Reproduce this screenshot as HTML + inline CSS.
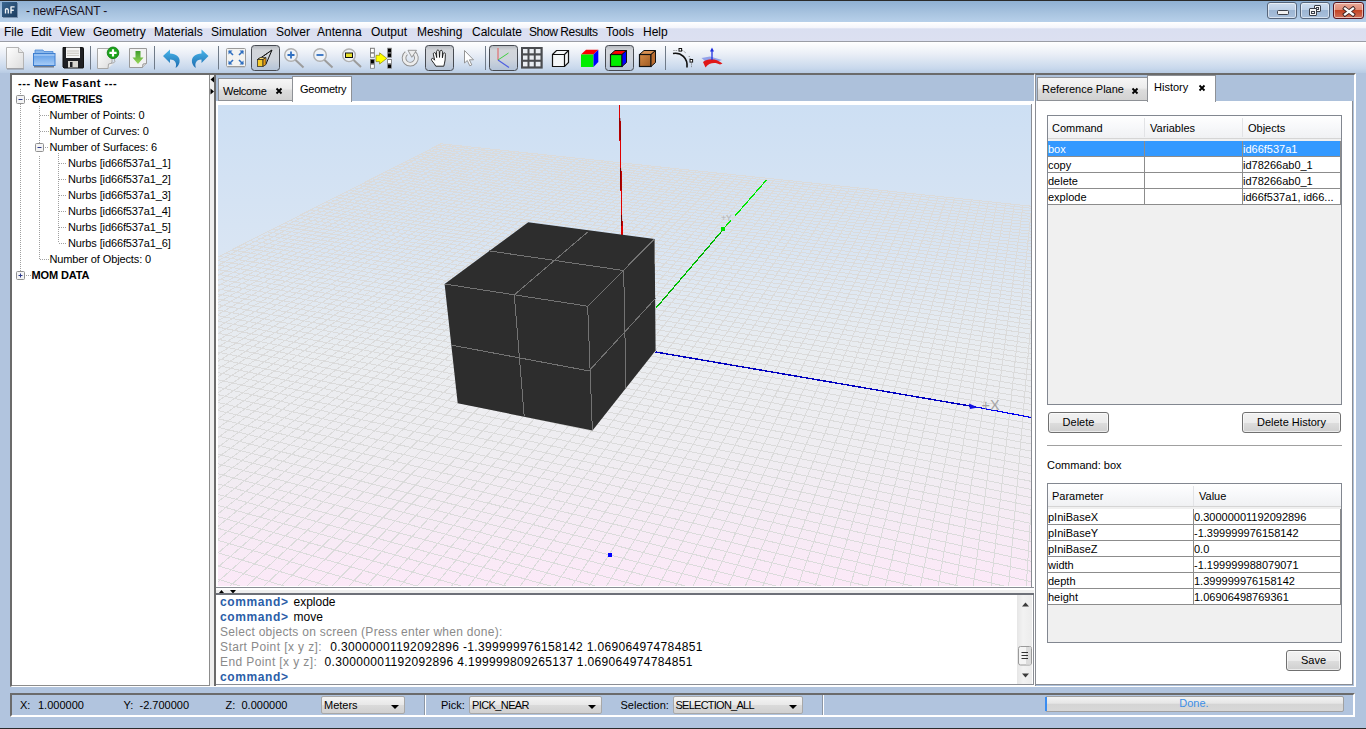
<!DOCTYPE html>
<html><head><meta charset="utf-8">
<style>
*{margin:0;padding:0;box-sizing:border-box}
html,body{width:1366px;height:729px;overflow:hidden;background:#b1c4de;font-family:"Liberation Sans",sans-serif;font-size:11px;color:#000}
.a{position:absolute}
#title{left:0;top:0;width:1366px;height:22px;background:linear-gradient(#8fb0d3,#a9c4e0 60%,#b7d0ea);border-top:1px solid #2a2a2a}
#menu{left:0;top:22px;width:1366px;height:20px;background:linear-gradient(#ffffff 0,#f4f5fb 30%,#dadff1 36%,#dce0f1 100%);border-bottom:1px solid #9a9da6}
#menu span{position:absolute;top:3px;font-size:12px;color:#000}
#tool{left:0;top:42px;width:1366px;height:31px;background:linear-gradient(#ffffff,#e9eef6 40%,#c8d8ec 85%,#b8cbe3)}
.wbtn{top:1px;width:30px;height:17px;border:1px solid #56657a;border-radius:3px;background:linear-gradient(#cddcee 0,#bccfe6 45%,#9db6d3 50%,#a9c0dc 100%);box-shadow:inset 0 0 0 1px rgba(255,255,255,.55)}
.close{width:31px;border-color:#5a1620;background:linear-gradient(#eaa898 0,#e08d78 45%,#c44424 50%,#d0705a 100%)}
.cmd{font-size:12px;line-height:15px;white-space:nowrap;color:#000}
.cmd b,.cmd span{position:absolute;height:15px}
.cmd b{color:#2b5ea8;letter-spacing:0.6px}
.cmd .g{color:#8a8a8a}
.tab{position:absolute;height:23px;border:1px solid #8e9196;border-bottom:none;background:linear-gradient(#f6f6f6 0,#ececec 45%,#dcdcdc 55%,#d2d2d2 100%);font-size:11px}
.tab.sel{background:#fff}
.x{position:absolute;font-weight:bold;font-size:11px}
.btn{position:absolute;border:1px solid #707070;border-radius:3px;background:linear-gradient(#f2f2f2 0,#ebebeb 50%,#dddddd 51%,#cfcfcf 100%);font-size:11px;text-align:center;box-shadow:inset 0 0 0 1px rgba(255,255,255,.6)}
.tbl{position:absolute;border:1px solid #828790;background:#f0f0f0}
.hd{position:absolute;height:22px;background:linear-gradient(#ffffff,#f7f8fa 50%,#f0f1f3);border-bottom:1px solid #d5d5d5;font-size:11px}
.cell{position:absolute;height:16px;border-right:1px solid #8c8c8c;border-bottom:1px solid #8c8c8c;background:#fff;font-size:11px;line-height:16px;padding-left:0;white-space:nowrap;overflow:hidden}
.combo{position:absolute;height:18px;border:1px solid #a8a8a8;border-radius:2px;background:linear-gradient(#f4f4f4,#e8e8e8 50%,#dadada 51%,#d0d0d0);font-size:11px;line-height:17px;padding-left:2px}
.combo i{position:absolute;right:5px;top:8px;border-left:4px solid transparent;border-right:4px solid transparent;border-top:4px solid #000}
.st{font-size:11px}
.panel{border:2px solid #6b6b6b;border-right-color:#fff;border-bottom-color:#fff;background:#fff}
.tree{font-size:11px;line-height:16px;letter-spacing:-0.12px}
.tree div{position:absolute;white-space:nowrap}
</style></head>
<body>
<div id="title" class="a">
<div class="a" style="left:2px;top:1px;width:15px;height:15px;background:linear-gradient(135deg,#3a6690,#1c3d60);box-shadow:1px 1px 0 rgba(40,60,90,.4)"></div>
<svg class="a" style="left:2px;top:1px" width="15" height="15" viewBox="0 0 15 15"><path d="M3.5 6.8V11.5M6.3 7.5V11.5M3.5 7.2Q4.9 6.2 6.3 7.5" stroke="#eef2f6" stroke-width="1.3" fill="none"/><path d="M9 4.5V11.5M9 4.9H12.6M9 8.2H11.8" stroke="#eef2f6" stroke-width="1.4" fill="none"/></svg>
<div class="a" style="left:26px;top:3px;font-size:12px;color:#1a1020;letter-spacing:-0.15px">- newFASANT -</div>
<div class="a wbtn" style="left:1267px"><div class="a" style="left:9px;top:7px;width:12px;height:5px;border:1px solid #3a3e48;border-radius:1.5px;background:#f0f0f0"></div></div>
<div class="a wbtn" style="left:1300px"><div class="a" style="left:13px;top:2px;width:7px;height:7px;border:1px solid #3a3e48;border-radius:1px;background:#f4f4f4"></div><div class="a" style="left:15px;top:4px;width:3px;height:3px;border:1px solid #3a3e48;"></div><div class="a" style="left:8px;top:5px;width:8px;height:8px;border:1px solid #3a3e48;border-radius:1px;background:#f4f4f4"></div><div class="a" style="left:10px;top:8px;width:4px;height:3px;border:1px solid #3a3e48;"></div></div>
<div class="a wbtn close" style="left:1333px"><svg class="a" style="left:8px;top:3px" width="14" height="11" viewBox="0 0 14 11"><path d="M3 2.5L11 8.5M11 2.5L3 8.5" stroke="#3b2020" stroke-width="4" stroke-linecap="square"/><path d="M3 2.5L11 8.5M11 2.5L3 8.5" stroke="#fafafa" stroke-width="2.2" stroke-linecap="square"/></svg></div>
</div>
<div id="menu" class="a">
<span style="left:4px">File</span>
<span style="left:31px">Edit</span>
<span style="left:59px">View</span>
<span style="left:93px">Geometry</span>
<span style="left:154px">Materials</span>
<span style="left:211px">Simulation</span>
<span style="left:276px">Solver</span>
<span style="left:317px">Antenna</span>
<span style="left:371px">Output</span>
<span style="left:417px">Meshing</span>
<span style="left:472px">Calculate</span>
<span style="left:529px;letter-spacing:-0.4px">Show Results</span>
<span style="left:606px">Tools</span>
<span style="left:643px">Help</span>
</div>
<div id="tool" class="a"></div>
<svg class="a" style="left:0;top:42px" width="740" height="32" viewBox="0 42 740 32">
<defs>
<linearGradient id="gdoc" x1="0" y1="0" x2="1" y2="1"><stop offset="0" stop-color="#ffffff"/><stop offset="1" stop-color="#dcdcdc"/></linearGradient>
<linearGradient id="gfold" x1="0" y1="0" x2="0" y2="1"><stop offset="0" stop-color="#5b9be6"/><stop offset="1" stop-color="#a9cdf7"/></linearGradient>
<linearGradient id="gpress" x1="0" y1="0" x2="0" y2="1"><stop offset="0" stop-color="#b4b8be"/><stop offset="0.2" stop-color="#d3d6db"/><stop offset="0.55" stop-color="#cfd4dc"/><stop offset="1" stop-color="#b3c3d8"/></linearGradient>
<linearGradient id="gblue" x1="0" y1="0" x2="0" y2="1"><stop offset="0" stop-color="#49b6ea"/><stop offset="1" stop-color="#1d6cb0"/></linearGradient>
<linearGradient id="ggreen" x1="0" y1="0" x2="0" y2="1"><stop offset="0" stop-color="#3f9d2a"/><stop offset="1" stop-color="#9ad85c"/></linearGradient>
<linearGradient id="gwood" x1="0" y1="0" x2="1" y2="1"><stop offset="0" stop-color="#d58a45"/><stop offset="1" stop-color="#9e5a22"/></linearGradient>
</defs>
<!-- new doc -->
<path d="M6.5 47.5H18.5L23.5 52.5V68.5H6.5Z" fill="url(#gdoc)" stroke="#b4b4b4"/>
<path d="M18.5 47.5V52.5H23.5" fill="#e8e8e8" stroke="#b4b4b4"/>
<line x1="7" y1="69" x2="24" y2="69" stroke="#8a8f98" stroke-width="1"/>
<!-- folder -->
<path d="M35 50h8l1 1.5h9V54H35Z" fill="#8ab8ec" stroke="#4a88d6" stroke-width="0.8"/>
<rect x="33.5" y="53.5" width="21.5" height="12" fill="url(#gfold)" stroke="#3f7fd0"/>
<line x1="34" y1="55" x2="54.5" y2="55" stroke="#c9e0fb" stroke-width="1"/>
<line x1="34" y1="66.8" x2="54" y2="66.8" stroke="#5a6270" stroke-width="1.2"/>
<!-- floppy -->
<path d="M63 47.5h19.5a1 1 0 0 1 1 1V67.5a0.5 .5 0 0 1 -.5 .5H64l-1-1Z" fill="#1f2024" stroke="#111"/>
<rect x="66" y="47.5" width="14" height="10.5" fill="#f6f6f6"/>
<line x1="67" y1="51" x2="79" y2="51" stroke="#c8c4bc"/><line x1="67" y1="53.2" x2="79" y2="53.2" stroke="#c8c4bc"/><line x1="67" y1="55.4" x2="79" y2="55.4" stroke="#c8c4bc"/>
<rect x="68" y="61" width="10" height="6.5" fill="#d8d6d0"/><rect x="70" y="62" width="2.5" height="5" fill="#1f2024"/>
<!-- sep -->
<line x1="90.5" y1="46" x2="90.5" y2="69.5" stroke="#6f7a88"/>
<!-- new plus -->
<path d="M97.5 48.5H112V62L108 68.5H97.5Z" fill="url(#gdoc)" stroke="#a8a8a8"/>
<path d="M108 68.5L108.5 64L114.5 62.5" fill="#ececec" stroke="#a8a8a8"/>
<line x1="112" y1="50" x2="115" y2="62" stroke="#a8a8a8"/>
<circle cx="113" cy="52.8" r="5.8" fill="#1aa31a" stroke="#0c7a0c" stroke-width="0.8"/>
<path d="M113 49.2V56.4M109.4 52.8H116.6" stroke="#fff" stroke-width="2.2"/>
<!-- import -->
<path d="M129.5 48.5H146.5V63.5L142.5 67.5H129.5Z" fill="#f2f2f2" stroke="#9a9a9a"/>
<path d="M142.5 67.5L143 64L146.5 63.5" fill="#e0e0e0" stroke="#9a9a9a"/>
<path d="M135.5 51H140.5V57.5H143.5L138 64L132.5 57.5H135.5Z" fill="url(#ggreen)"/>
<!-- sep -->
<line x1="154.5" y1="46" x2="154.5" y2="69.5" stroke="#6f7a88"/>
<!-- undo -->
<path d="M163 56L170 49.5V53.5C176 53.5 180.5 57 179.5 62.5C179 65 177 67.5 175.5 67.8C177 64.5 176 59.5 170 59.5V63Z" fill="url(#gblue)"/>
<!-- redo -->
<path d="M208.5 56L201.5 49.5V53.5C195.5 53.5 191 57 192 62.5C192.5 65 194.5 67.5 196 67.8C194.5 64.5 195.5 59.5 201.5 59.5V63Z" fill="url(#gblue)"/>
<!-- sep -->
<line x1="218.5" y1="46" x2="218.5" y2="69.5" stroke="#6f7a88"/>
<!-- fit -->
<rect x="226.5" y="48.5" width="19" height="18" fill="#f3f3f1" stroke="#9a9a9a" rx="1"/>
<line x1="227" y1="67.5" x2="245" y2="67.5" stroke="#bcc6d2"/>
<g stroke="#2f6fc0" stroke-width="1.6" fill="#2f6fc0">
<path d="M229 51L233 55" /><path d="M228.5 50.5h4l-4 4z" stroke="none"/>
<path d="M243 51L239 55"/><path d="M243.5 50.5h-4l4 4z" stroke="none"/>
<path d="M229 64L233 60"/><path d="M228.5 64.5h4l-4-4z" stroke="none"/>
<path d="M243 64L239 60"/><path d="M243.5 64.5h-4l4-4z" stroke="none"/>
</g>
<!-- pressed perspective -->
<rect x="251.5" y="45.5" width="28" height="25" rx="3" fill="url(#gpress)" stroke="#474b52"/>
<path d="M258 59L262 57L272 50L266 64L262 66" fill="none" stroke="#111" stroke-width="1"/>
<path d="M262 57L272 50" stroke="#111" stroke-dasharray="1.5 1"/>
<path d="M257.5 59.5l3-2h5.5l-3 2z" fill="#f5d86a" stroke="#222" stroke-width=".7"/>
<rect x="257.5" y="59.5" width="5.5" height="7" fill="#f3c92c" stroke="#222" stroke-width=".7"/>
<path d="M263 59.5l3-2V64.5l-3 2z" fill="#e39a15" stroke="#222" stroke-width=".7"/>
<!-- zoom in -->
<line x1="295" y1="59.5" x2="303.5" y2="67.5" stroke="#9c9c9c" stroke-width="2"/>
<circle cx="291" cy="55" r="6.3" fill="#eef2f7" stroke="#b0b0b0" stroke-width="1.4"/>
<path d="M291 51.5V58.5M287.5 55H294.5" stroke="#2f6fc0" stroke-width="1.8"/>
<!-- zoom out -->
<line x1="324" y1="59.5" x2="332.5" y2="67.5" stroke="#9c9c9c" stroke-width="2"/>
<circle cx="320" cy="55" r="6.3" fill="#eef2f7" stroke="#b0b0b0" stroke-width="1.4"/>
<path d="M316.5 55H323.5" stroke="#2f6fc0" stroke-width="1.8"/>
<!-- zoom window -->
<line x1="353" y1="59.5" x2="361" y2="67" stroke="#9c9c9c" stroke-width="2"/>
<circle cx="349" cy="55.3" r="6.3" fill="#eef2f7" stroke="#b0b0b0" stroke-width="1.4"/>
<rect x="345.5" y="53" width="7" height="4.5" fill="#e8e02a" stroke="#111" stroke-width="1"/>
<!-- arrow columns -->
<rect x="370" y="47.8" width="4.8" height="9.9" fill="#7a7a7a"/><rect x="370" y="59" width="4.8" height="9.6" fill="#7a7a7a"/>
<rect x="370.9" y="48.8" width="3" height="3.4" fill="#fff"/><rect x="370.9" y="53.6" width="3" height="3.3" fill="#fff"/><rect x="370.9" y="59.9" width="3" height="3.3" fill="#000"/><rect x="370.9" y="64.7" width="3" height="3.2" fill="#fff"/>
<rect x="387.2" y="47.8" width="4.6" height="9.9" fill="#7a7a7a"/><rect x="387.2" y="59" width="4.6" height="9.6" fill="#7a7a7a"/>
<rect x="388" y="48.8" width="3" height="3.4" fill="#000"/><rect x="388" y="53.6" width="3" height="3.3" fill="#000"/><rect x="388" y="59.9" width="3" height="3.3" fill="#fff"/><rect x="388" y="64.7" width="3" height="3.2" fill="#000"/>
<path d="M376 55.3H379.6V52.8L386.8 58.4L379.6 64V61.6H376Z" fill="#ffff00" stroke="#7a7000" stroke-width="0.6"/>
<!-- rotate -->
<path d="M406.4 53.1A6.2 6.2 0 1 0 413.6 52.8" fill="none" stroke="#8e8e8e" stroke-width="4.6"/>
<path d="M406.4 53.1A6.2 6.2 0 1 0 413.6 52.8" fill="none" stroke="#ededed" stroke-width="2.8"/>
<path d="M408 50.3H416.5L411.8 57.3Z" fill="#ededed" stroke="#8e8e8e" stroke-width="0.9" stroke-linejoin="round"/>
<!-- pressed hand -->
<rect x="425.5" y="45.5" width="28" height="25" rx="3" fill="url(#gpress)" stroke="#474b52"/>
<path d="M435.8 66.2C435 64.5 433.5 62.8 432 60.8C431.2 59.8 431.3 58.6 432.3 58.4C433.2 58.2 434 59.3 434.6 60.2L433.4 54.2C433.2 53.2 433.8 52.6 434.5 52.6C435.2 52.6 435.7 53.2 435.9 54L436.7 57.6L436.6 51.6C436.6 50.7 437.2 50.1 437.9 50.1C438.6 50.1 439.2 50.7 439.2 51.6L439.5 57.4L439.9 51.7C440 50.8 440.6 50.3 441.2 50.3C441.9 50.3 442.4 50.9 442.4 51.7L442.4 57.8L443.1 54C443.3 53.1 443.8 52.7 444.4 52.8C445.1 52.9 445.5 53.5 445.4 54.3L445.1 60C444.9 62 444.2 64.3 443.8 66.2Z" fill="#fff" stroke="#111" stroke-width="0.9" stroke-linejoin="round"/>
<!-- cursor -->
<path d="M464.5 50.5V63L467.3 60.5L469.8 65.8L471.8 64.9L469.4 59.8H473.5Z" fill="#fff" stroke="#8a8a8a" stroke-width="0.9" stroke-linejoin="round"/>
<!-- sep -->
<line x1="485.5" y1="46" x2="485.5" y2="70" stroke="#6f7a88"/>
<!-- pressed axes -->
<rect x="489.5" y="45.5" width="28" height="25" rx="3" fill="url(#gpress)" stroke="#474b52"/>
<line x1="498" y1="48" x2="498" y2="60" stroke="#e07070" stroke-width="1.2"/>
<line x1="498" y1="60" x2="508.5" y2="53" stroke="#40d040" stroke-width="1"/>
<line x1="498" y1="60" x2="509" y2="67.5" stroke="#5060e0" stroke-width="1.2"/>
<!-- grid -->
<rect x="521" y="47" width="21.7" height="21.6" fill="#4a4c50"/>
<g fill="#e9edf2"><rect x="523" y="49" width="4.5" height="4.3"/><rect x="529.5" y="49" width="4.3" height="4.3"/><rect x="535.7" y="49" width="4.8" height="4.3"/><rect x="523" y="55.5" width="4.5" height="4.2"/><rect x="529.5" y="55.5" width="4.3" height="4.2"/><rect x="535.7" y="55.5" width="4.8" height="4.2"/><rect x="523" y="61.8" width="4.5" height="4.6"/><rect x="529.5" y="61.8" width="4.3" height="4.6"/><rect x="535.7" y="61.8" width="4.8" height="4.6"/></g>
<!-- white cube -->
<path d="M552.5 54.5L556.5 50.5H568.5V62.5L564.5 66.5H552.5Z" fill="#f4f6f8" stroke="#111" stroke-width="1.2"/>
<path d="M552.5 54.5H564.5V66.5M564.5 54.5L568.5 50.5" fill="none" stroke="#111" stroke-width="1.2"/>
<!-- rgb cube -->
<path d="M581 54.5L586 49.7H598.3L593.5 54.5Z" fill="#ff0000"/>
<rect x="581" y="54.5" width="12.5" height="12.5" fill="#00ee00"/>
<path d="M593.5 54.5L598.3 49.7V62L593.5 67Z" fill="#0000ff"/>
<!-- pressed rgb -->
<rect x="605.5" y="45.5" width="28" height="25" rx="3" fill="url(#gpress)" stroke="#474b52"/>
<path d="M610.5 54.5L615 50.5H626.5L622 54.5Z" fill="#ff0000" stroke="#111" stroke-width="1"/>
<rect x="610.5" y="54.5" width="11.5" height="12" fill="#00ee00" stroke="#111" stroke-width="1.2"/>
<path d="M622 54.5L626.5 50.5V62.5L622 66.5Z" fill="#0000ff" stroke="#111" stroke-width="1"/>
<!-- wood cube -->
<path d="M639.5 54.5L644 50.5H655.5L651 54.5Z" fill="#d99050" stroke="#111" stroke-width="1"/>
<rect x="639.5" y="54.5" width="11.5" height="12" fill="url(#gwood)" stroke="#111" stroke-width="1.2"/>
<path d="M651 54.5L655.5 50.5V62.5L651 66.5Z" fill="#b86c30" stroke="#111" stroke-width="1"/>
<!-- sep -->
<line x1="665.5" y1="46" x2="665.5" y2="70" stroke="#6f7a88"/>
<!-- arc -->
<path d="M673 53.5C681 52 688 58 687 67.5" fill="none" stroke="#111" stroke-width="1.6"/>
<path d="M673.5 50.5H678M682 50L686 53M689 56L691 60.5M691.5 63.5V68" stroke="#555" stroke-width=".8" stroke-dasharray="1 1.2"/>
<rect x="679" y="48.5" width="2.6" height="2.6" fill="#fff" stroke="#111" stroke-width="1"/>
<rect x="690" y="59.5" width="2.6" height="2.6" fill="#fff" stroke="#111" stroke-width="1"/>
<!-- surface -->
<path d="M701.5 58L710 56.5L722 60L716 62L705 61Z" fill="#7e8ee6" opacity=".8"/>
<path d="M703 62C708 58 716 58 722.5 63.5L720 64.5C716 62 709 62 705.5 67.5Z" fill="#e01818"/>
<line x1="712" y1="49" x2="712" y2="60" stroke="#2030e0" stroke-width="1.3"/>
<path d="M710 51.5L712 47.5L714 51.5Z" fill="#2030e0"/>
</svg>

<!-- left tree panel -->
<div class="a" style="left:10px;top:73px;width:1346px;height:614px;border-top:2px solid #6b6b6b;border-left:2px solid #6b6b6b;border-right:2px solid #fff;border-bottom:1px solid #fff;background:#efefef"></div>
<div class="a" style="left:12px;top:75px;width:198px;height:611px;border-right:1px solid #8c8c8c;border-bottom:1px solid #8c8c8c;background:#fff"></div>

<div class="a tree" style="left:0;top:0">
<div style="left:18px;top:75px;height:16px;font-weight:bold;letter-spacing:0.55px">--- New Fasant ---</div>
<div style="left:31.5px;top:91px;height:16px;font-weight:bold;letter-spacing:-0.25px">GEOMETRIES</div>
<div style="left:49.5px;top:107px;height:16px">Number of Points: 0</div>
<div style="left:49.5px;top:123px;height:16px">Number of Curves: 0</div>
<div style="left:49.5px;top:139px;height:16px">Number of Surfaces: 6</div>
<div style="left:68px;top:155px;height:16px">Nurbs [id66f537a1_1]</div>
<div style="left:68px;top:171px;height:16px">Nurbs [id66f537a1_2]</div>
<div style="left:68px;top:187px;height:16px">Nurbs [id66f537a1_3]</div>
<div style="left:68px;top:203px;height:16px">Nurbs [id66f537a1_4]</div>
<div style="left:68px;top:219px;height:16px">Nurbs [id66f537a1_5]</div>
<div style="left:68px;top:235px;height:16px">Nurbs [id66f537a1_6]</div>
<div style="left:49.5px;top:251px;height:16px">Number of Objects: 0</div>
<div style="left:31.5px;top:267px;height:16px;font-weight:bold">MOM DATA</div>
</div>
<svg class="a" style="left:0;top:0" width="210" height="300" viewBox="0 0 210 300"><g stroke="#a0a0a0" stroke-width="1" stroke-dasharray="1 1" fill="none"><path d="M20.5 89V95M20.5 104V275M26 99.5H31M39.5 106V147M39.5 156V259.5H49M26 275.5H31M58.5 153V243M40 115.5H49M40 131.5H49M45 147.5H49"/><path d="M59 163.5H67"/><path d="M59 179.5H67"/><path d="M59 195.5H67"/><path d="M59 211.5H67"/><path d="M59 227.5H67"/><path d="M59 243.5H67"/></g><rect x="16.5" y="95.5" width="8" height="8" rx="1" fill="#f4f4f4" stroke="#919191"/><path d="M18.5 99.5H22.5" stroke="#2d3a8c" stroke-width="1"/><rect x="35.5" y="143.5" width="8" height="8" rx="1" fill="#f4f4f4" stroke="#919191"/><path d="M37.5 147.5H41.5" stroke="#2d3a8c" stroke-width="1"/><rect x="16.5" y="271.5" width="8" height="8" rx="1" fill="#f4f4f4" stroke="#919191"/><path d="M18.5 275.5H22.5" stroke="#2d3a8c" stroke-width="1"/><path d="M20.5 273.5V277.5" stroke="#2d3a8c" stroke-width="1"/></svg>
<!-- center -->
<div class="a" style="left:214px;top:73px;width:821px;height:613px;border-top:2px solid #6b6b6b;border-left:2px solid #6b6b6b;border-right:1px solid #fff;background:#adc1db"></div>
<div class="a" style="left:216px;top:101px;width:818px;height:585px;background:#fff"></div>
<div class="a" id="vp" style="left:218px;top:105px;width:813px;height:482px;overflow:hidden;background:linear-gradient(#cddff3 0%,#d9e5f3 30%,#eaedf0 52%,#efedf1 72%,#fce9f8 100%)">
<svg class="a" style="left:0;top:0" width="813" height="482" viewBox="0 0 813 482"><path d="M-588.5 456.6L227.1 39.3M-581.3 447.0L1317.1 1224.0M-579.8 460.3L232.8 39.9M-563.4 437.9L1304.8 1183.8M-570.9 464.0L238.5 40.5M-546.0 429.0L1293.1 1145.8M-562.0 467.7L244.3 41.1M-528.9 420.4L1282.0 1109.6M-552.9 471.5L250.1 41.7M-512.3 412.0L1271.5 1075.3M-543.8 475.3L255.9 42.3M-496.0 403.7L1261.5 1042.6M-534.6 479.1L261.8 42.9M-480.2 395.7L1251.9 1011.4M-525.2 483.0L267.6 43.6M-464.7 387.8L1242.8 981.7M-515.8 487.0L273.5 44.2M-449.5 380.1L1234.1 953.3M-506.2 490.9L279.5 44.8M-434.8 372.6L1225.7 926.2M-496.5 495.0L285.4 45.4M-420.3 365.3L1217.8 900.2M-486.8 499.1L291.4 46.1M-406.2 358.1L1210.1 875.3M-476.9 503.2L297.4 46.7M-392.3 351.1L1202.8 851.4M-466.9 507.4L303.5 47.3M-378.8 344.2L1195.8 828.6M-456.7 511.6L309.5 48.0M-365.6 337.5L1189.0 806.6M-446.5 515.8L315.6 48.6M-352.6 330.9L1182.6 785.4M-436.1 520.2L321.8 49.3M-339.9 324.5L1176.3 765.1M-425.7 524.5L327.9 49.9M-327.5 318.2L1170.3 745.5M-415.1 529.0L334.1 50.6M-315.3 312.0L1164.5 726.7M-404.3 533.4L340.3 51.2M-303.4 305.9L1158.9 708.5M-393.5 538.0L346.6 51.9M-291.7 300.0L1153.6 691.0M-382.5 542.6L352.9 52.6M-280.3 294.2L1148.4 674.1M-371.3 547.2L359.2 53.2M-269.1 288.5L1143.4 657.7M-360.1 551.9L365.5 53.9M-258.1 282.9L1138.5 641.9M-348.7 556.6L371.9 54.6M-247.3 277.4L1133.8 626.7M-337.1 561.5L378.3 55.3M-236.7 272.1L1129.3 611.9M-325.4 566.3L384.8 55.9M-226.3 266.8L1124.9 597.6M-313.6 571.3L391.2 56.6M-216.1 261.6L1120.7 583.8M-301.6 576.3L397.7 57.3M-206.1 256.6L1116.5 570.3M-289.4 581.3L404.3 58.0M-196.3 251.6L1112.5 557.3M-277.1 586.5L410.9 58.7M-186.7 246.7L1108.7 544.7M-264.7 591.7L417.5 59.4M-177.2 241.9L1104.9 532.5M-252.1 596.9L424.1 60.1M-168.0 237.2L1101.3 520.6M-239.3 602.3L430.8 60.8M-158.8 232.6L1097.7 509.0M-226.3 607.7L437.5 61.5M-149.9 228.0L1094.3 497.8M-213.2 613.1L444.2 62.2M-141.1 223.6L1090.9 486.9M-199.9 618.7L451.0 62.9M-132.4 219.2L1087.7 476.3M-186.4 624.3L457.8 63.7M-123.9 214.8L1084.5 466.0M-172.8 630.0L464.6 64.4M-115.6 210.6L1081.4 456.0M-158.9 635.8L471.5 65.1M-107.4 206.4L1078.4 446.2M-144.9 641.6L478.4 65.8M-99.3 202.3L1075.5 436.7M-130.6 647.6L485.4 66.6M-91.4 198.3L1072.7 427.4M-116.2 653.6L492.4 67.3M-83.6 194.4L1069.9 418.4M-101.6 659.7L499.4 68.0M-75.9 190.5L1067.2 409.5M-86.7 665.9L506.5 68.8M-68.3 186.6L1064.6 401.0M-71.7 672.1L513.6 69.5M-60.9 182.8L1062.0 392.6M-56.4 678.5L520.7 70.3M-53.6 179.1L1059.5 384.4M-40.9 685.0L527.9 71.1M-46.4 175.5L1057.0 376.4M-25.2 691.5L535.1 71.8M-39.3 171.9L1054.6 368.6M-9.3 698.2L542.3 72.6M-32.3 168.3L1052.3 361.0M6.9 704.9L549.6 73.4M-25.4 164.9L1050.0 353.6M23.3 711.8L556.9 74.1M-18.7 161.4L1047.8 346.3M39.9 718.7L564.3 74.9M-12.0 158.0L1045.6 339.2M56.8 725.8L571.7 75.7M-5.4 154.7L1043.5 332.3M74.0 732.9L579.1 76.5M1.0 151.4L1041.4 325.5M91.4 740.2L586.6 77.3M7.4 148.2L1039.4 318.9M109.1 747.6L594.1 78.1M13.6 145.0L1037.4 312.4M127.1 755.1L601.7 78.9M19.8 141.9L1035.4 306.0M145.4 762.7L609.3 79.7M25.9 138.8L1033.5 299.8M163.9 770.4L616.9 80.5M31.9 135.7L1031.6 293.7M182.7 778.2L624.6 81.3M37.8 132.7L1029.8 287.7M201.9 786.2L632.4 82.1M43.7 129.8L1028.0 281.9M221.3 794.3L640.1 82.9M49.4 126.9L1026.3 276.2M241.1 802.6L648.0 83.7M55.1 124.0L1024.5 270.6M261.2 811.0L655.8 84.6M60.7 121.2L1022.9 265.1M281.6 819.5L663.7 85.4M66.2 118.4L1021.2 259.7M302.3 828.1L671.7 86.3M71.6 115.6L1019.6 254.4M323.5 836.9L679.6 87.1M77.0 112.9L1018.0 249.2M344.9 845.9L687.7 87.9M82.2 110.2L1016.4 244.1M366.8 855.0L695.8 88.8M87.5 107.6L1014.9 239.1M389.0 864.3L703.9 89.7M92.6 104.9L1013.4 234.2M411.6 873.7L712.0 90.5M97.7 102.4L1011.9 229.4M434.6 883.3L720.3 91.4M102.7 99.8L1010.5 224.7M458.0 893.0L728.5 92.3M107.6 97.3L1009.1 220.1M481.8 903.0L736.8 93.1M112.5 94.8L1007.7 215.6M506.1 913.1L745.2 94.0M117.3 92.4L1006.3 211.1M530.7 923.4L753.6 94.9M122.1 90.0L1004.9 206.7M555.9 933.9L762.0 95.8M126.8 87.6L1003.6 202.4M581.5 944.5L770.5 96.7M131.4 85.3L1002.3 198.2M607.6 955.4L779.1 97.6M136.0 82.9L1001.1 194.0M634.2 966.5L787.7 98.5M140.5 80.6L999.8 189.9M661.3 977.8L796.3 99.4M144.9 78.4L998.6 185.9M688.9 989.3L805.0 100.3M149.4 76.1L997.4 182.0M717.1 1001.1L813.8 101.3M153.7 73.9L996.2 178.1M745.8 1013.0L822.6 102.2M158.0 71.8L995.0 174.3M775.0 1025.3L831.4 103.1M162.2 69.6L993.8 170.5M804.9 1037.7L840.3 104.1M166.4 67.5L992.7 166.8M835.4 1050.4L849.3 105.0M170.6 65.4L991.6 163.2M866.5 1063.4L858.3 106.0M174.7 63.3L990.5 159.6M898.2 1076.6L867.3 106.9M178.7 61.2L989.4 156.1M930.6 1090.1L876.5 107.9M182.7 59.2L988.4 152.6M963.7 1103.9L885.6 108.9M186.7 57.2L987.3 149.2M997.5 1118.0L894.8 109.8M190.6 55.2L986.3 145.9M1032.0 1132.4L904.1 110.8M194.4 53.3L985.3 142.6M1067.2 1147.1L913.5 111.8M198.2 51.3L984.3 139.3M1103.3 1162.1L922.9 112.8M202.0 49.4L983.3 136.1M1140.1 1177.5L932.3 113.8M205.7 47.5L982.3 133.0M1177.8 1193.2L941.8 114.8M209.4 45.6L981.4 129.8M1216.3 1209.3L951.4 115.8M213.1 43.8L980.4 126.8M1255.8 1225.7L961.0 116.8M216.7 42.0L979.5 123.8M1296.1 1242.5L970.7 117.8M220.2 40.2L978.6 120.8M-595.0 453.9L222.9 38.8M-595.0 453.9L1326.8 1255.3M1326.8 1255.3L977.9 118.6M222.9 38.8L977.9 118.6" stroke="#dbdbdb" stroke-width="1" fill="none" shape-rendering="crispEdges"/></svg>
<svg class="a" style="left:0;top:0" width="813" height="482" viewBox="0 0 813 482"><path d="M401.5 0.0L404.1 130.0" stroke="#e00000" stroke-width="1.4" shape-rendering="crispEdges"/><path d="M401.8 13.0L402.3 35.0M402.6 63.0L403.0 85.0M403.5 110.0L403.8 121.0" stroke="#6a0000" stroke-width="1"/><path d="M437.9 203.1L504.8 125.0" stroke="#00a800" stroke-width="1.3" shape-rendering="crispEdges"/><path d="M437.9 203.1L504.8 125.0" stroke="#00e000" stroke-width="1" stroke-dasharray="3 5" shape-rendering="crispEdges"/><path d="M505 124.5L513 115M517 111L548.6 74.8" stroke="#00e800" stroke-width="1.2" shape-rendering="crispEdges"/><rect x="503" y="122" width="4" height="4" fill="#00e000"/><text x="503" y="116" font-size="8.5" fill="#b4b4b4" font-family="Liberation Sans">+Y</text><path d="M437.5 247.0L756.8 301.8" stroke="#0000c0" stroke-width="1.4" shape-rendering="crispEdges"/><path d="M756.8 301.8L813.0 312.4" stroke="#0000f0" stroke-width="1.2" shape-rendering="crispEdges"/><path d="M760.0 302.5L751.0 298.5L752.0 304.0Z" fill="#1010e0"/><text x="763.5" y="304.8" font-size="14.5" fill="#a4a4a4" font-family="Liberation Sans">+X</text><rect x="390" y="448" width="4" height="4" fill="#0000ff"/><path d="M310.2 117.2L436.6 134.0L437.6 245.4L374.5 325.5L239.7 298.2L226.6 179.0Z" fill="#2d2d2d"/><path d="M226.6 179.0L369.7 201.2M369.7 201.2L436.6 134.0M369.7 201.2L374.4 325.5M271.2 145.9L405.7 165.5M369.7 127.0L296.3 189.8M233.8 240.2L371.0 265.9M296.3 189.8L306.2 311.0M405.7 165.5L408.0 283.9M371.0 265.9L437.6 193.3M436.6 134.0L436.6 158.5" stroke="#737373" stroke-width="1" fill="none" shape-rendering="crispEdges"/></svg>
</div>


<!-- splitter tree|center -->
<div class="a" style="left:210px;top:75px;width:4px;height:610px;background:#efefef"></div>
<svg class="a" style="left:209px;top:75px" width="6" height="22" viewBox="0 0 6 22"><path d="M1.5 4.5L5 1.5V7.5Z" fill="#000"/><path d="M1.5 13.5L5 16.5L1.5 19.5Z" fill="#000"/></svg>
<!-- viewport bottom border + split bar -->
<div class="a" style="left:216px;top:586px;width:818px;height:2px;background:#fff"></div>
<div class="a" style="left:216px;top:587px;width:818px;height:1px;background:#8a8d94"></div>
<div class="a" style="left:216px;top:104px;width:2px;height:483px;background:#fff"></div>
<div class="a" style="left:1031px;top:104px;width:1px;height:483px;background:#8a8d94"></div>
<div class="a" style="left:216px;top:588px;width:818px;height:5px;background:linear-gradient(#fff 0,#fff 35%,#efefef 35%)"></div>
<svg class="a" style="left:216px;top:588px" width="24" height="6" viewBox="0 0 24 6"><path d="M3 5L5.5 2L8 5Z" fill="#000"/><path d="M14 2H20L17 5.5Z" fill="#000"/></svg>
<div class="a" style="left:216px;top:593px;width:818px;height:2px;background:#6d7078"></div>
<!-- command area -->
<div class="a" style="left:216px;top:595px;width:818px;height:90px;background:#fff;border-right:1px solid #8a8d94;border-bottom:1px solid #8a8d94"></div>
<div class="a cmd" style="left:0;top:0">
<b style="left:220px;top:595px">command&gt;</b><span style="left:293.5px;top:595px">explode</span>
<b style="left:220px;top:610px">command&gt;</b><span style="left:293.5px;top:610px">move</span>
<span class="g" style="left:220px;top:625px;letter-spacing:0.28px">Select objects on screen (Press enter when done):</span>
<span class="g" style="left:220px;top:640px;letter-spacing:0.4px">Start Point [x y z]:</span><span style="left:330.2px;top:640px;letter-spacing:0.34px">0.30000001192092896 -1.399999976158142 1.069064974784851</span>
<span class="g" style="left:220px;top:655px;letter-spacing:0.4px">End Point [x y z]:</span><span style="left:324.6px;top:655px;letter-spacing:0.34px">0.30000001192092896 4.199999809265137 1.069064974784851</span>
<b style="left:220px;top:670px">command&gt;</b>
</div>
<!-- scrollbar -->
<div class="a" style="left:1017px;top:595px;width:15px;height:89px;background:linear-gradient(90deg,#e6e6e6,#f2f2f2 40%,#ececec)"></div>
<svg class="a" style="left:1017px;top:595px" width="15" height="89" viewBox="0 0 15 89"><path d="M5 11.5L8.5 7.5L12 11.5Z" fill="#3c3c3c"/><path d="M5 78.5H12L8.5 82.5Z" fill="#3c3c3c"/>
<rect x="1.5" y="51.5" width="13" height="18.5" rx="2" fill="#f4f4f4" stroke="#9a9a9a"/><rect x="9" y="52" width="5" height="17.5" fill="#dcdcdc"/>
<path d="M4.5 57.5H11M4.5 60.5H11M4.5 63.5H11" stroke="#333" stroke-width="1"/></svg>


<!-- center tabs -->
<div class="tab" style="left:218px;top:78px;width:75px;border-bottom:1px solid #8e9196"><span class="a" style="left:4px;top:6px;letter-spacing:-0.3px">Welcome</span><svg class="a" style="left:56px;top:8px" width="8" height="8" viewBox="0 0 8 8"><path d="M1.5 1.5L6.5 6.5M6.5 1.5L1.5 6.5" stroke="#000" stroke-width="1.8"/></svg></div>
<div class="tab sel" style="left:292px;top:76px;width:60px;height:26px"><span class="a" style="left:7px;top:5.5px;letter-spacing:-0.25px">Geometry</span></div>

<!-- right -->
<div class="a" style="left:1035px;top:73px;width:319px;height:613px;border-top:2px solid #6b6b6b;border-left:1px solid #8a8d94;background:#adc1db"></div>
<div class="a" style="left:1036px;top:101px;width:317px;height:584px;background:#fff;border-right:1px solid #8a8d94;border-bottom:1px solid #8a8d94"></div>


<!-- right tabs -->
<div class="tab" style="left:1037px;top:77px;width:111px;height:24px;border-bottom:1px solid #8e9196"><span class="a" style="left:4px;top:5px">Reference Plane</span><svg class="a" style="left:93px;top:9px" width="8" height="8" viewBox="0 0 8 8"><path d="M1.5 1.5L6.5 6.5M6.5 1.5L1.5 6.5" stroke="#000" stroke-width="1.8"/></svg></div>
<div class="tab sel" style="left:1147px;top:75px;width:69px;height:27px"><span class="a" style="left:6px;top:5px">History</span><svg class="a" style="left:50px;top:8px" width="8" height="8" viewBox="0 0 8 8"><path d="M1.5 1.5L6.5 6.5M6.5 1.5L1.5 6.5" stroke="#000" stroke-width="1.8"/></svg></div>
<!-- right content -->
<div class="tbl" style="left:1047px;top:115px;width:295px;height:290px"></div>
<div class="hd" style="left:1048px;top:116px;width:293px;height:23px"></div>
<div class="a" style="left:1144px;top:118px;width:1px;height:19px;background:#e2e3e6"></div>
<div class="a" style="left:1242px;top:118px;width:1px;height:19px;background:#e2e3e6"></div>
<span class="a" style="left:1052px;top:122px">Command</span>
<span class="a" style="left:1150px;top:122px">Variables</span>
<span class="a" style="left:1248px;top:122px">Objects</span>
<div class="cell" style="left:1048px;top:141px;width:97px;background:#3399ff;color:#fff">box</div>
<div class="cell" style="left:1145px;top:141px;width:98px;background:#3399ff;color:#fff"></div>
<div class="cell" style="left:1243px;top:141px;width:98px;background:#3399ff;color:#fff">id66f537a1</div>
<div class="cell" style="left:1048px;top:157px;width:97px">copy</div>
<div class="cell" style="left:1145px;top:157px;width:98px"></div>
<div class="cell" style="left:1243px;top:157px;width:98px">id78266ab0_1</div>
<div class="cell" style="left:1048px;top:173px;width:97px">delete</div>
<div class="cell" style="left:1145px;top:173px;width:98px"></div>
<div class="cell" style="left:1243px;top:173px;width:98px">id78266ab0_1</div>
<div class="cell" style="left:1048px;top:189px;width:97px">explode</div>
<div class="cell" style="left:1145px;top:189px;width:98px"></div>
<div class="cell" style="left:1243px;top:189px;width:98px">id66f537a1, id66...</div>
<div class="btn" style="left:1048px;top:412px;width:61px;height:21px;line-height:19px">Delete</div>
<div class="btn" style="left:1242px;top:412px;width:99px;height:21px;line-height:19px">Delete History</div>
<div class="a" style="left:1047px;top:445px;width:295px;height:1px;background:#a0a0a0"></div>
<div class="a" style="left:1047px;top:445px;width:295px;height:1px;background:#a0a0a0"></div>
<span class="a" style="left:1047px;top:459px;font-size:11px">Command: box</span>
<div class="tbl" style="left:1047px;top:483px;width:295px;height:160px"></div>
<div class="hd" style="left:1048px;top:484px;width:293px;height:23px"></div>
<div class="a" style="left:1193px;top:486px;width:1px;height:20px;background:#e2e3e6"></div>
<span class="a" style="left:1052px;top:490px">Parameter</span>
<span class="a" style="left:1199px;top:490px">Value</span>
<div class="cell" style="left:1048px;top:509px;width:146px">pIniBaseX</div>
<div class="cell" style="left:1194px;top:509px;width:147px">0.30000001192092896</div>
<div class="cell" style="left:1048px;top:525px;width:146px">pIniBaseY</div>
<div class="cell" style="left:1194px;top:525px;width:147px">-1.399999976158142</div>
<div class="cell" style="left:1048px;top:541px;width:146px">pIniBaseZ</div>
<div class="cell" style="left:1194px;top:541px;width:147px">0.0</div>
<div class="cell" style="left:1048px;top:557px;width:146px">width</div>
<div class="cell" style="left:1194px;top:557px;width:147px">-1.199999988079071</div>
<div class="cell" style="left:1048px;top:573px;width:146px">depth</div>
<div class="cell" style="left:1194px;top:573px;width:147px">1.399999976158142</div>
<div class="cell" style="left:1048px;top:589px;width:146px">height</div>
<div class="cell" style="left:1194px;top:589px;width:147px">1.06906498769361</div>
<div class="btn" style="left:1286px;top:650px;width:55px;height:21px;line-height:19px">Save</div>
<!-- status -->
<div class="a" style="left:10px;top:693px;width:1345px;height:24px;border-top:2px solid #6b6b6b;border-left:2px solid #6b6b6b;border-right:2px solid #fff;border-bottom:2px solid #fff"></div>
<div class="a" style="left:0;top:728px;width:1366px;height:1px;background:#2a2a2a"></div>

<!-- status content -->
<div class="a st" style="left:20px;top:699px">X:</div><div class="a st" style="left:38px;top:699px">1.000000</div>
<div class="a st" style="left:123.5px;top:699px">Y:</div><div class="a st" style="left:139.5px;top:699px">-2.700000</div>
<div class="a st" style="left:225.5px;top:699px">Z:</div><div class="a st" style="left:241.5px;top:699px">0.000000</div>
<div class="combo" style="left:321px;top:696px;width:84px">Meters<i></i></div>
<div class="a" style="left:424px;top:695px;width:1px;height:20px;background:#8c96a4;box-shadow:1px 0 0 #fff"></div>
<div class="a st" style="left:441px;top:699px">Pick:</div>
<div class="combo" style="left:469px;top:696px;width:133px"><span style="letter-spacing:-0.6px">PICK_NEAR</span><i></i></div>
<div class="a st" style="left:620.5px;top:699px">Selection:</div>
<div class="combo" style="left:672.5px;top:696px;width:130.5px"><span style="letter-spacing:-0.75px">SELECTION_ALL</span><i></i></div>
<div class="a" style="left:822px;top:695px;width:1px;height:20px;background:#8c96a4;box-shadow:1px 0 0 #fff"></div>
<div class="a" style="left:1044.5px;top:696px;width:299px;height:15.5px;border:1px solid #a0a0a0;border-radius:2px;background:linear-gradient(#f2f2f2,#e6e6e6 45%,#d4d4d4 50%,#d8d8d8 100%);text-align:center;font-size:11px;line-height:12px;color:#3d8ee6">Done.</div>
<div class="a" style="left:1045px;top:697px;width:2px;height:13.5px;background:#3a8cf0"></div>
</body></html>
